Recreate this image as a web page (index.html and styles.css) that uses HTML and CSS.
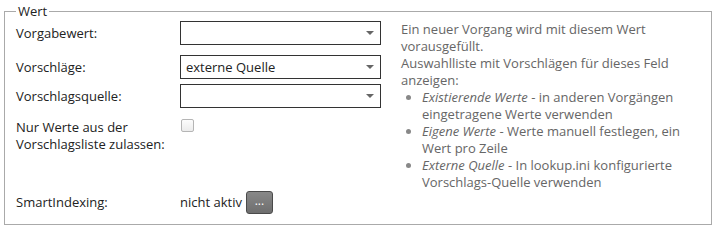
FILE: index.html
```html
<!DOCTYPE html>
<html lang="de">
<head>
  <meta charset="UTF-8">
  <title>Wert</title>
  <link rel="stylesheet" href="styles.css">
</head>
<body>
  <fieldset class="group">
    <legend>Wert</legend>

    <div class="top">
      <!-- Field rows -->
      <div class="fields">
        <div class="row">
          <label class="label">Vorgabewert:</label>
          <div class="select">
            <span class="value"></span>
            <svg class="arrow" width="8" height="4" viewBox="0 0 8 4"><path d="M0 0h8L4 4z"/></svg>
          </div>
        </div>
        <div class="row row-2">
          <label class="label">Vorschläge:</label>
          <div class="select">
            <span class="value">externe Quelle</span>
            <svg class="arrow" width="8" height="4" viewBox="0 0 8 4"><path d="M0 0h8L4 4z"/></svg>
          </div>
        </div>
        <div class="row row-3">
          <label class="label">Vorschlagsquelle:</label>
          <div class="select">
            <span class="value"></span>
            <svg class="arrow" width="8" height="4" viewBox="0 0 8 4"><path d="M0 0h8L4 4z"/></svg>
          </div>
        </div>
        <div class="row row-4">
          <label class="label">Nur Werte aus der Vorschlagsliste zulassen:</label>
          <span class="checkbox"></span>
        </div>
      </div>

      <!-- Help text -->
      <div class="help">
        <p>Ein neuer Vorgang wird mit diesem Wert vorausgefüllt.</p>
        <p>Auswahlliste mit Vorschlägen für dieses Feld anzeigen:</p>
        <ul>
          <li><em>Existierende Werte</em> - in anderen Vorgängen eingetragene Werte verwenden</li>
          <li><em>Eigene Werte</em> - Werte manuell festlegen, ein Wert pro Zeile</li>
          <li><em>Externe Quelle</em> - In lookup.ini konfigurierte Vorschlags-Quelle verwenden</li>
        </ul>
      </div>
    </div>

    <div class="row row-smart">
      <label class="label">SmartIndexing:</label>
      <span class="state">nicht aktiv</span>
      <button class="more">...</button>
    </div>
  </fieldset>
</body>
</html>
```

FILE: styles.css
```css
body {
  margin: 0;
  background-color: white;
  font-family: "Open Sans", "Liberation Sans", sans-serif;
  font-size: 13px;
  line-height: 17px;
  color: #222;
}

/* Group box */
.group {
  margin: 3px 2px 3px 4px;
  padding: 1px 11px 10px 11px;
  border: 1px solid #aaa;
  min-width: 0;
}

.group legend {
  padding: 0 2px;
  color: #222;
}

.top {
  display: flex;
  align-items: flex-start;
}

/* Field rows */
.fields {
  width: 365px;
  flex-shrink: 0;
}

.row {
  display: flex;
  align-items: center;
}

.row-2 {
  margin-top: 10px;
}

.row-3 {
  margin-top: 5px;
}

.row-4 {
  margin-top: 11px;
  align-items: flex-start;
}

.label {
  width: 164px;
  flex-shrink: 0;
}

.select {
  width: 201px;
  height: 24px;
  box-sizing: border-box;
  border: 1px solid #333;
  background-color: white;
  display: flex;
  align-items: center;
  justify-content: space-between;
  padding: 0 6px 0 5px;
}

.select .arrow {
  fill: #666;
}

.checkbox {
  width: 13px;
  height: 13px;
  box-sizing: border-box;
  margin-left: 1px;
  border: 1px solid #b5b5b5;
  border-radius: 2px;
  background: linear-gradient(#fcfcfc, #ececec);
}

/* Help column */
.help {
  margin-left: 20px;
  flex: 1;
  color: #666;
}

.help p {
  margin: 0;
}

.help ul {
  margin: 0;
  padding-left: 21px;
}

.help li::marker {
  color: #888;
}

/* SmartIndexing row */
.row-smart {
  height: 23px;
}

.state {
  margin-right: 4px;
}

.more {
  width: 27px;
  height: 23px;
  padding: 0 0 4px 0;
  border: 1px solid #4a4a4a;
  border-radius: 3px;
  background: linear-gradient(#888, #6e6e6e);
  color: white;
  font-family: "Open Sans", "Liberation Sans", sans-serif;
  font-size: 12px;
  line-height: 12px;
  cursor: pointer;
}
```
